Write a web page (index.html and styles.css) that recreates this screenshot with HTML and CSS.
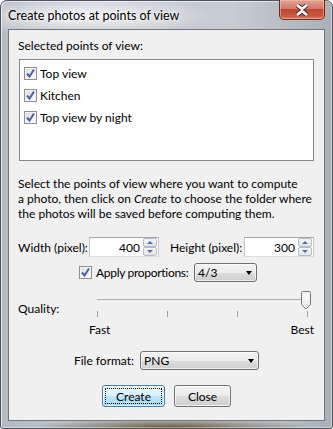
FILE: index.html
```html
<!DOCTYPE html>
<html>
<head>
<meta charset="UTF-8">
<title>Create photos at points of view</title>
<link rel="stylesheet" href="styles.css">
</head>
<body>
<div class="window">
	<div class="titlebar">
		<span class="title">Create photos at points of view</span>
		<div class="close">
			<svg width="20" height="12" viewBox="0 0 20 12">
				<path d="M5 1 L10 5 L15 1 M5 11 L10 7 L15 11" stroke="#3a2a28" stroke-width="4.6" fill="none" stroke-linejoin="round"/>
				<path d="M5 1 L10 5 L15 1 M5 11 L10 7 L15 11" stroke="#ffffff" stroke-width="2.8" fill="none" stroke-linejoin="round"/>
			</svg>
		</div>
	</div>

	<div class="client">
		<div class="caption">Selected points of view:</div>
		<div class="listbox">
			<div class="item"><span class="check"><svg width="11" height="11" viewBox="0 0 11 11"><path d="M2 5.5 L4.5 8.5 L9 1.5" stroke="#4b61a8" stroke-width="2" fill="none"/></svg></span>Top view</div>
			<div class="item"><span class="check"><svg width="11" height="11" viewBox="0 0 11 11"><path d="M2 5.5 L4.5 8.5 L9 1.5" stroke="#4b61a8" stroke-width="2" fill="none"/></svg></span>Kitchen</div>
			<div class="item"><span class="check"><svg width="11" height="11" viewBox="0 0 11 11"><path d="M2 5.5 L4.5 8.5 L9 1.5" stroke="#4b61a8" stroke-width="2" fill="none"/></svg></span>Top view by night</div>
		</div>

		<p class="info">Select the points of view where you want to compute<br>a photo, then click on <i>Create</i> to choose the folder where<br>the photos will be saved before computing them.</p>

		<div class="size-row">
			<span class="lbl lbl-w">Width (pixel):</span>
			<div class="spin">
				<span class="spin-val">400</span>
				<div class="spin-btns">
					<span class="spin-btn"><i class="up"></i></span>
					<span class="spin-btn"><i class="down"></i></span>
				</div>
			</div>
			<span class="lbl lbl-h">Height (pixel):</span>
			<div class="spin">
				<span class="spin-val">300</span>
				<div class="spin-btns">
					<span class="spin-btn"><i class="up"></i></span>
					<span class="spin-btn"><i class="down"></i></span>
				</div>
			</div>
		</div>

		<div class="prop-row">
			<span class="check"><svg width="11" height="11" viewBox="0 0 11 11"><path d="M2 5.5 L4.5 8.5 L9 1.5" stroke="#4b61a8" stroke-width="2" fill="none"/></svg></span>
			<span class="prop-lbl">Apply proportions:</span>
			<div class="combo combo-small"><span>4/3</span><i class="arrow"></i></div>
		</div>

		<div class="quality-row">
			<span class="lbl lbl-q">Quality:</span>
			<div class="slider">
				<div class="track"></div>
				<svg class="thumb" width="12" height="19" viewBox="0 0 12 19">
					<path d="M1.5 1.5 Q1.5 0.5 2.5 0.5 L9.5 0.5 Q10.5 0.5 10.5 1.5 L10.5 13.5 L6 18 L1.5 13.5 Z" fill="#eeeeee" stroke="#7a7a7a"/>
					<path d="M2.5 2 L9.5 2 L9.5 9 L2.5 9 Z" fill="#f8f8f8"/>
				</svg>
				<div class="ticks">
					<span></span><span></span><span></span><span></span>
				</div>
			</div>
		</div>
		<div class="scale">
			<span>Fast</span>
			<span>Best</span>
		</div>

		<div class="format-row">
			<span class="fmt-lbl">File format:</span>
			<div class="combo combo-wide"><span>PNG</span><i class="arrow"></i></div>
		</div>

		<div class="buttons">
			<div class="btn btn-default"><span class="focus">Create</span></div>
			<div class="btn btn-close">Close</div>
		</div>
	</div>
</div>
</body>
</html>
```

FILE: styles.css
```css
* {
	margin: 0;
	padding: 0;
	box-sizing: border-box;
}

body {
	width: 333px;
	height: 429px;
	font-family: Lato, "Noto Sans", sans-serif;
	font-size: 12px;
	color: #000000;
	background: #ffffff;
	overflow: hidden;
}

.window {
	width: 333px;
	height: 429px;
	border: 1px solid #4d545b;
	border-radius: 7px 7px 3px 3px;
	padding: 0 7px 7px 7px;
	background:
		radial-gradient(ellipse 130px 22px at 80px 15px, rgba(255,255,255,0.85), rgba(255,255,255,0) 100%),
		radial-gradient(ellipse 140px 10px at 170px 427px, rgba(92,70,40,0.9), rgba(92,70,40,0) 100%),
		linear-gradient(to right, #b3bac1 0, #c4cad0 40%, #c7ccd1 70%, #a9b0b7 100%);
	box-shadow: inset 1px 1px 0 rgba(255,255,255,0.6), inset -1px -1px 0 rgba(255,255,255,0.4);
}

.titlebar {
	height: 28px;
	display: flex;
	justify-content: space-between;
	align-items: flex-start;
}

.title {
	margin-top: 7px;
	font-size: 12.5px;
	line-height: 15px;
	color: #000000;
	white-space: nowrap;
	text-shadow: 0 0 6px #ffffff, 0 0 3px #ffffff;
}

.close {
	width: 46px;
	height: 20px;
	margin-top: -1px;
	border: 1px solid #6b2b20;
	border-top: none;
	border-radius: 0 0 5px 5px;
	background: linear-gradient(to bottom, #e3a294 0, #d27a6a 45%, #c0452f 50%, #c95a42 85%, #d98469 100%);
	box-shadow: inset 0 0 0 1px rgba(255,200,180,0.5);
	display: flex;
	justify-content: center;
	align-items: center;
}

.client {
	height: 392px;
	background: #f0f0f0;
	border: 1px solid #6f767d;
	display: flex;
	flex-direction: column;
}

.caption {
	margin: 8px 0 0 9px;
	line-height: 15px;
}

.listbox {
	margin: 6px 0 0 10px;
	width: 295px;
	height: 102px;
	border: 1px solid #828790;
	background: #ffffff;
	padding: 2px 0 0 4px;
}

.item {
	height: 22px;
	display: flex;
	align-items: center;
	gap: 3px;
}

.check {
	flex-shrink: 0;
	width: 13px;
	height: 13px;
	border: 1px solid #8e8f8f;
	background: linear-gradient(135deg, #dcdcdc, #ffffff);
	display: inline-flex;
	justify-content: center;
	align-items: center;
	box-shadow: inset 0 0 0 1px #f4f4f4;
}

.info {
	margin: 15px 0 0 9px;
	line-height: 15px;
	white-space: nowrap;
}

.size-row {
	margin: 16px 0 0 9px;
	display: flex;
	align-items: center;
	height: 20px;
}

.lbl {
	white-space: nowrap;
	flex-shrink: 0;
}

.lbl-w {
	width: 71px;
}

.lbl-h {
	width: 74px;
	margin-left: 11px;
}

.spin {
	flex-shrink: 0;
	width: 70px;
	height: 20px;
	border: 1px solid #abadb3;
	border-top-color: #a2a5ab;
	border-left-color: #c5c8cf;
	border-right-color: #c5c8cf;
	border-bottom-color: #dadde3;
	background: #ffffff;
	display: flex;
	align-items: center;
}

.spin-val {
	flex: 1;
	text-align: right;
	padding-right: 3px;
}

.spin-btns {
	width: 14px;
	height: 18px;
	display: flex;
	flex-direction: column;
	margin-right: 1px;
}

.spin-btn {
	flex: 1;
	border: 1px solid #b6bcc4;
	border-radius: 2px;
	background: linear-gradient(to bottom, #f6f6f6, #e2e4e8);
	display: flex;
	justify-content: center;
	align-items: center;
}

.spin-btn i {
	width: 0;
	height: 0;
	border-left: 3px solid transparent;
	border-right: 3px solid transparent;
}

.spin-btn .up {
	border-bottom: 3px solid #4f6db0;
}

.spin-btn .down {
	border-top: 3px solid #4f6db0;
}

.prop-row {
	margin: 6px 0 0 70px;
	height: 19px;
	display: flex;
	align-items: center;
}

.prop-lbl {
	margin-left: 4px;
	width: 98px;
	white-space: nowrap;
	letter-spacing: -0.3px;
}

.combo {
	flex-shrink: 0;
	height: 19px;
	border: 1px solid #707070;
	border-radius: 3px;
	background: linear-gradient(to bottom, #f2f2f2 0, #ebebeb 50%, #dddddd 50%, #cfcfcf 100%);
	box-shadow: inset 0 0 0 1px rgba(255,255,255,0.6);
	display: flex;
	align-items: center;
	justify-content: space-between;
	padding: 0 4px 0 3px;
}

.combo-small {
	width: 63px;
}

.combo-wide {
	width: 119px;
}

.arrow {
	width: 0;
	height: 0;
	border-left: 3.5px solid transparent;
	border-right: 3.5px solid transparent;
	border-top: 4px solid #000000;
	margin-top: 1px;
}

.quality-row {
	margin: 9px 0 0 9px;
	height: 27px;
	display: flex;
}

.lbl-q {
	width: 79px;
	padding-top: 10px;
	line-height: 15px;
}

.slider {
	position: relative;
	width: 216px;
	height: 27px;
}

.track {
	position: absolute;
	left: 0;
	top: 8px;
	width: 214px;
	height: 3px;
	border-top: 1px solid #b5b5b5;
	border-bottom: 1px solid #f8f8f8;
	background: #e7e7e7;
}

.thumb {
	position: absolute;
	left: 203px;
	top: 0;
}

.ticks {
	position: absolute;
	left: 0;
	top: 20px;
	width: 211px;
	display: flex;
	justify-content: space-between;
}

.ticks span {
	width: 1px;
	height: 6px;
	background: #a0a0a0;
}

.scale {
	margin: 4px 0 0 80px;
	width: 225px;
	display: flex;
	justify-content: space-between;
	line-height: 15px;
}

.format-row {
	margin-top: 14px;
	height: 19px;
	display: flex;
	justify-content: center;
	align-items: center;
	gap: 6px;
}

.buttons {
	margin-top: 15px;
	display: flex;
	justify-content: center;
	gap: 9px;
}

.btn {
	height: 22px;
	border: 1px solid #707070;
	border-radius: 3px;
	background: linear-gradient(to bottom, #f2f2f2 0, #ebebeb 50%, #dddddd 50%, #cfcfcf 100%);
	box-shadow: inset 0 0 0 1px rgba(255,255,255,0.7);
	display: flex;
	justify-content: center;
	align-items: center;
}

.btn-default {
	width: 63px;
	border-color: #3c7fb1;
	background: linear-gradient(to bottom, #eaf6fd 0, #d9f0fc 50%, #bee6fd 50%, #a7d9f5 100%);
	padding: 2px;
}

.btn-default .focus {
	width: 100%;
	height: 100%;
	border: 1px dotted #000000;
	display: flex;
	justify-content: center;
	align-items: center;
}

.btn-close {
	width: 57px;
}
```
